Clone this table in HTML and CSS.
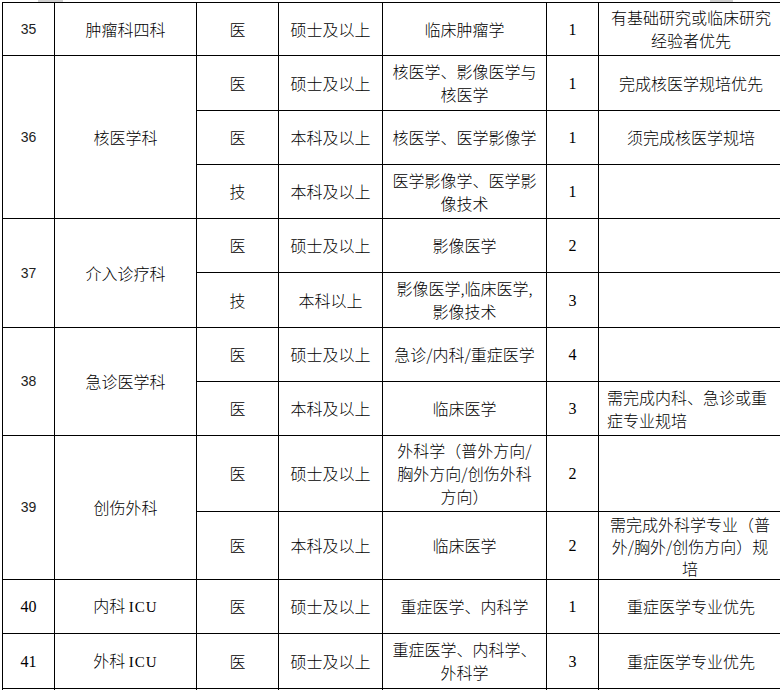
FILE: index.html
```html
<!DOCTYPE html>
<html lang="zh-CN">
<head>
<meta charset="utf-8">
<title>岗位表</title>
<link rel="stylesheet" href="styles.css">
</head>
<body>
<div class="strip"><span class="mark m1"></span><span class="mark m2"></span></div>
<table class="grid">
  <colgroup>
    <col class="c-no"><col class="c-dept"><col class="c-type"><col class="c-edu"><col class="c-major"><col class="c-num"><col class="c-note">
  </colgroup>
  <tbody>
    <tr class="h53">
      <td class="no">35</td><td>肿瘤科四科</td><td>医</td><td>硕士及以上</td><td>临床肿瘤学</td><td class="num">1</td><td>有基础研究或临床研究<br>经验者优先</td>
    </tr>
    <tr class="h55">
      <td class="no" rowspan="3">36</td><td rowspan="3">核医学科</td><td>医</td><td>硕士及以上</td><td>核医学、影像医学与<br>核医学</td><td class="num">1</td><td>完成核医学规培优先</td>
    </tr>
    <tr class="h54">
      <td>医</td><td>本科及以上</td><td>核医学、医学影像学</td><td class="num">1</td><td>须完成核医学规培</td>
    </tr>
    <tr class="h54">
      <td>技</td><td>本科及以上</td><td>医学影像学、医学影<br>像技术</td><td class="num">1</td><td></td>
    </tr>
    <tr class="h54">
      <td class="no" rowspan="2">37</td><td rowspan="2">介入诊疗科</td><td>医</td><td>硕士及以上</td><td>影像医学</td><td class="num">2</td><td></td>
    </tr>
    <tr class="h55">
      <td>技</td><td>本科以上</td><td>影像医学,临床医学,<br>影像技术</td><td class="num">3</td><td></td>
    </tr>
    <tr class="h54">
      <td class="no" rowspan="2">38</td><td rowspan="2">急诊医学科</td><td>医</td><td>硕士及以上</td><td>急诊/内科/重症医学</td><td class="num">4</td><td></td>
    </tr>
    <tr class="h54">
      <td>医</td><td>本科及以上</td><td>临床医学</td><td class="num">3</td><td class="left">需完成内科、急诊或重<br>症专业规培</td>
    </tr>
    <tr class="h76">
      <td class="no" rowspan="2">39</td><td rowspan="2">创伤外科</td><td>医</td><td>硕士及以上</td><td>外科学（普外方向/<br>胸外方向/创伤外科<br>方向）</td><td class="num">2</td><td></td>
    </tr>
    <tr class="h68">
      <td>医</td><td>本科及以上</td><td>临床医学</td><td class="num">2</td><td class="tight">需完成外科学专业（普<br>外/胸外/创伤方向）规<br>培</td>
    </tr>
    <tr class="h54">
      <td class="no serif">40</td><td>内科 <span class="latin">ICU</span></td><td>医</td><td>硕士及以上</td><td>重症医学、内科学</td><td class="num">1</td><td>重症医学专业优先</td>
    </tr>
    <tr class="h55">
      <td class="no serif">41</td><td>外科 <span class="latin">ICU</span></td><td>医</td><td>硕士及以上</td><td>重症医学、内科学、<br>外科学</td><td class="num">3</td><td>重症医学专业优先</td>
    </tr>
    <tr class="h54">
      <td></td><td></td><td></td><td></td><td></td><td></td><td></td>
    </tr>
  </tbody>
</table>
</body>
</html>
```

FILE: styles.css
```css
html, body {
  margin: 0;
  padding: 0;
  background: #ffffff;
}

body {
  width: 780px;
  height: 690px;
  overflow: hidden;
  font-family: "Noto Sans CJK SC", "Noto Sans", sans-serif;
  font-size: 16px;
  font-weight: 300;
  color: #000000;
}

.strip {
  display: flex;
  height: 2px;
}

.mark {
  display: block;
  height: 2px;
  background: #cfcfcf;
}

.m1 {
  width: 25px;
  margin-left: 38px;
}

.m2 {
  width: 23px;
  margin-left: 647px;
}

.grid {
  margin-left: 2px;
  width: 781px;
  table-layout: fixed;
  border-collapse: collapse;
  border: 1px solid #000000;
}

.c-no { width: 52px; }
.c-dept { width: 142px; }
.c-type { width: 82px; }
.c-edu { width: 104px; }
.c-major { width: 164px; }
.c-num { width: 52px; }
.c-note { width: 185px; }

.grid td {
  border: 1px solid #000000;
  padding: 0 4px;
  text-align: center;
  vertical-align: middle;
  line-height: 23px;
  white-space: nowrap;
}

.grid td.left {
  text-align: left;
  padding-left: 8px;
}

.grid td.tight {
  line-height: 22px;
  padding-right: 6px;
}

.grid td.no {
  font-family: "Liberation Sans", Arial, sans-serif;
  font-size: 14px;
  font-weight: 400;
  color: #222222;
}

.grid td.no.serif {
  font-family: "Liberation Serif", "Times New Roman", serif;
  font-size: 16px;
  color: #000000;
}

.grid td.num {
  font-family: "Liberation Serif", "Times New Roman", serif;
  font-size: 16px;
  font-weight: 400;
}

.latin {
  font-family: "Liberation Serif", "Times New Roman", serif;
  font-size: 15px;
  font-weight: 400;
  letter-spacing: 1px;
}

.h53 { height: 53px; }
.h54 { height: 54px; }
.h55 { height: 55px; }
.h68 { height: 68px; }
.h76 { height: 76px; }
```
